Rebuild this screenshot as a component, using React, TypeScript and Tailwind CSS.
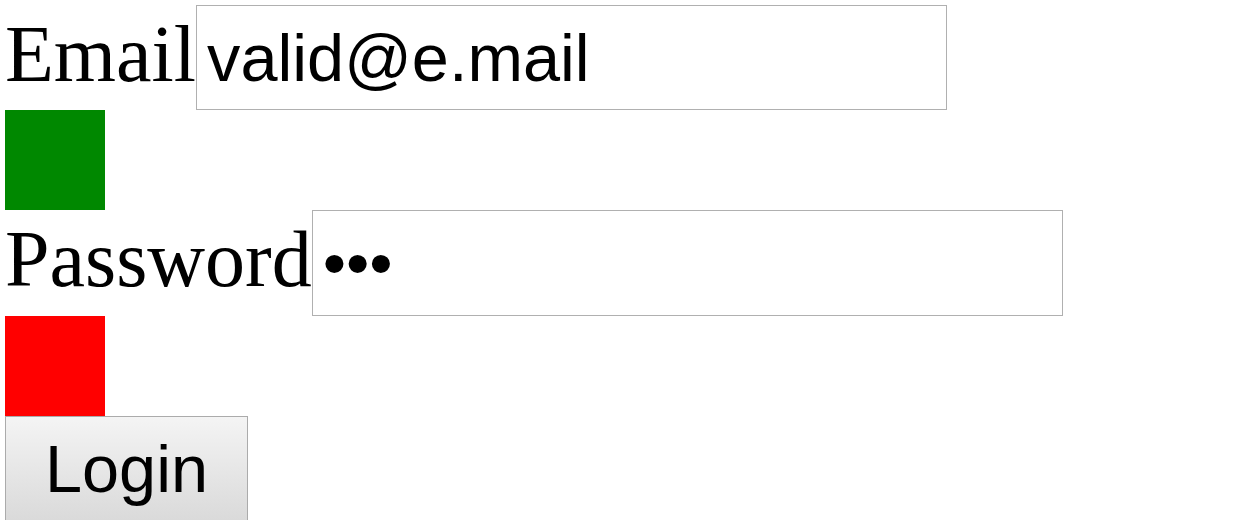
// Login form, blown up: serif labels, plain inputs, status boxes
const App = () => {
  return (
    <div className="min-h-[520px] bg-white p-[5px] text-black">
      {/* Email row */}
      <div className="flex items-baseline">
        <span className="font-['Liberation_Serif',serif] text-[80px] leading-none">Email</span>
        <input
          type="text"
          readOnly
          value="valid@e.mail"
          className="h-[105px] w-[751px] border border-[#b0b0b0] bg-white px-[10px] py-0 font-['Liberation_Sans',Arial,sans-serif] text-[66.67px] outline-none"
        />
      </div>
      {/* Email status */}
      <div className="h-[100px] w-[100px] bg-[#008800]" />

      {/* Password row */}
      <div className="flex items-baseline">
        <span className="font-['Liberation_Serif',serif] text-[80px] leading-none">Password</span>
        <input
          type="password"
          readOnly
          value="abc"
          className="h-[106px] w-[751px] border border-[#b0b0b0] bg-white px-[10px] py-0 font-['Liberation_Sans',Arial,sans-serif] text-[66.67px] outline-none"
        />
      </div>
      {/* Password status */}
      <div className="h-[100px] w-[100px] bg-[#ff0000]" />

      <button className="flex h-[105px] w-[243px] items-center justify-center border border-[#ababab] bg-gradient-to-b from-[#f4f4f4] to-[#dadada] font-['Liberation_Sans',Arial,sans-serif] text-[66.67px] text-black">
        Login
      </button>
    </div>
  );
};

export default App;
